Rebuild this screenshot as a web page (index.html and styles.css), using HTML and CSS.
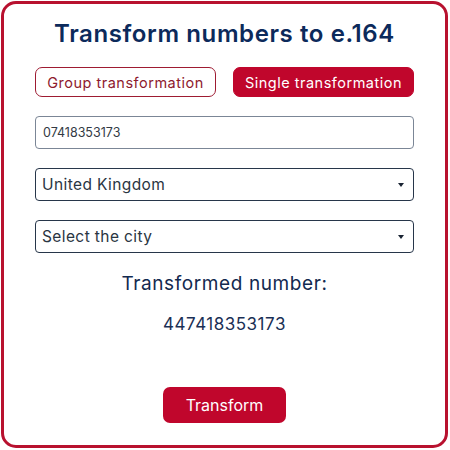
FILE: index.html
```html
<!DOCTYPE html>
<html>
<head>
<meta charset="utf-8">
<link rel="stylesheet" href="styles.css">
</head>
<body>
<div class="card">
  <h1 class="title">Transform numbers to e.164</h1>
  <div class="tabs">
    <button class="tab tab-outline">Group transformation</button>
    <button class="tab tab-filled">Single transformation</button>
  </div>
  <div class="field field-input">07418353173</div>
  <div class="field field-select"><span>United Kingdom</span><span class="caret"></span></div>
  <div class="field field-select"><span>Select the city</span><span class="caret"></span></div>
  <div class="result-label">Transformed number:</div>
  <div class="result-value">447418353173</div>
  <button class="submit">Transform</button>
</div>
</body>
</html>
```
FILE: styles.css
```css
* { box-sizing: border-box; }
html, body { margin: 0; padding: 0; background: #fff; }
body { font-family: Inter, "Open Sans", sans-serif; color: #0f2a55; }
.card {
  margin: 1px;
  width: 447px;
  height: 447px;
  border: 3px solid #b8112f;
  border-radius: 15px;
  padding: 0 31px;
  display: flex;
  flex-direction: column;
  align-items: stretch;
}
.title {
  margin: 15px 0 0;
  height: 30px;
  font-size: 24px;
  font-weight: 600;
  text-align: center;
  color: #0c2a5b;
  letter-spacing: 0.6px;
}
.tabs {
  display: flex;
  justify-content: space-between;
  margin-top: 18px;
}
.tab {
  width: 181px;
  height: 30px;
  border-radius: 7px;
  font-family: inherit;
  font-size: 14.5px;
  letter-spacing: 0.5px;
  padding: 0;
}
.tab-outline { background: #fff; border: 1.5px solid #9e1b32; color: #8e1a2e; }
.tab-filled { background: #c0062c; border: 1.5px solid #c0062c; color: #fff; }
.field {
  height: 33px;
  border-radius: 4px;
  display: flex;
  align-items: center;
  justify-content: space-between;
  padding: 0 9px 0 6px;
}
.field-input {
  margin-top: 19px;
  border: 1px solid #7b8696;
  font-size: 12.5px;
  color: #333a44;
  padding-left: 7px;
}
.field-select {
  margin-top: 19px;
  border: 1px solid #27364a;
  font-size: 15.5px;
  letter-spacing: 0.4px;
  color: #2a3542;
}
.caret {
  width: 0; height: 0;
  border-left: 3px solid transparent;
  border-right: 3px solid transparent;
  border-top: 4px solid #1a2433;
}
.result-label {
  margin-top: 18px;
  text-align: center;
  font-size: 19px;
  letter-spacing: 0.6px;
  color: #12294f;
  height: 26px;
  line-height: 26px;
}
.result-value {
  margin-top: 15px;
  text-align: center;
  font-size: 17px;
  letter-spacing: 0.5px;
  color: #1a2f55;
  height: 24px;
  line-height: 24px;
}
.submit {
  align-self: center;
  margin-top: 51px;
  width: 123px;
  height: 36px;
  border: none;
  border-radius: 7px;
  background: #c0062c;
  color: #fff;
  font-family: inherit;
  font-size: 16px;
}
```
